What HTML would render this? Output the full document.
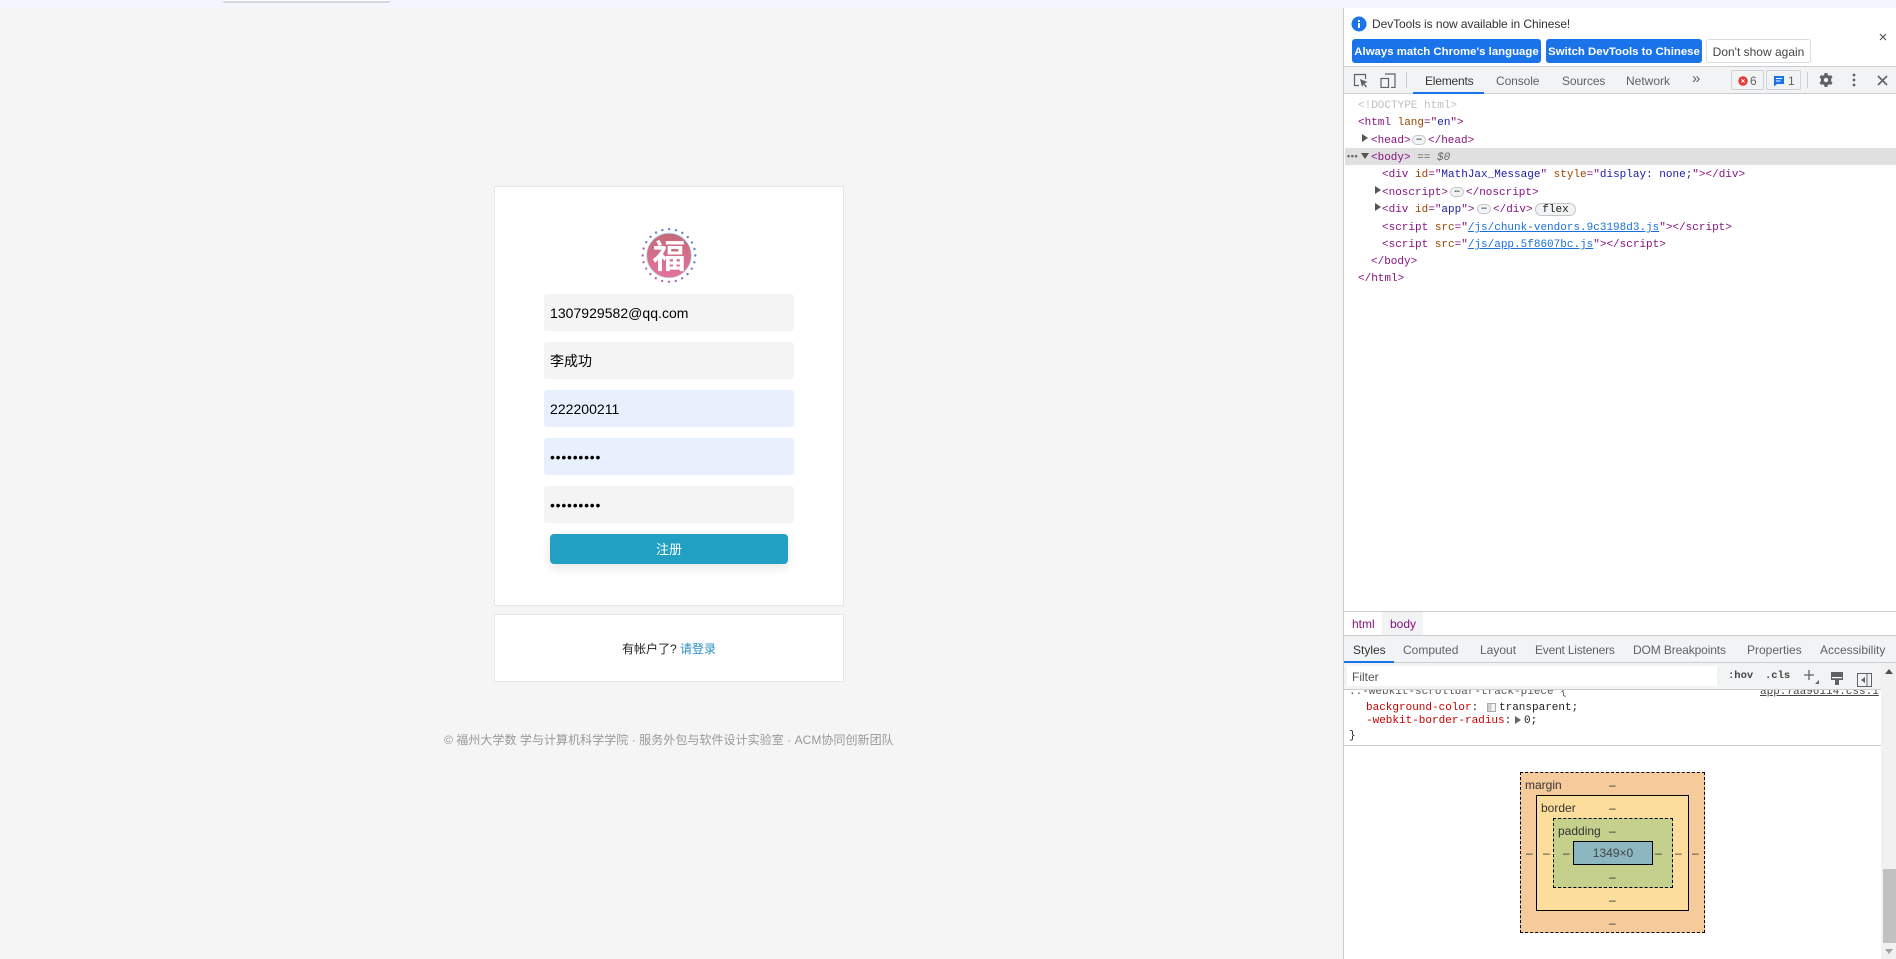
<!DOCTYPE html>
<html lang="zh">
<head>
<meta charset="utf-8">
<title>注册</title>
<style>
*{box-sizing:border-box}
html,body{margin:0;padding:0;width:1896px;height:959px;overflow:hidden;background:#f5f5f5;font-family:"Liberation Sans","Noto Sans CJK SC",sans-serif}
.a{position:absolute}
.t{position:absolute;white-space:nowrap}
.card{position:absolute;left:494px;width:350px;background:#fff;border:1px solid #e6e6e6}
.in{position:absolute;left:544px;width:250px;height:37px;border-radius:3px;background:#f4f4f4;font-size:14px;line-height:39px;padding-left:6px;color:#000;white-space:nowrap;overflow:hidden;letter-spacing:.03px}
.blue{background:#e8f0fe}
.pw{font-size:14px;letter-spacing:.78px;line-height:37px;padding-top:1px}
.dt{font-size:12px;color:#333;line-height:16px}
.tab{position:absolute;white-space:nowrap;font-size:12px;line-height:16px;color:#5f6368}
.m{position:absolute;white-space:nowrap;font-family:"Liberation Mono",monospace;font-size:11px;line-height:17px;color:#881280;margin-top:1px}
.n{color:#994500}.v{color:#1a1aa6}
.m a{color:#1a6fd8;text-decoration:underline}
.dots{position:absolute;width:14px;height:10px;border:1px solid #c4c4c4;border-radius:5px;background:#f1f3f4;color:#555;font:bold 5px/8px "Liberation Sans",sans-serif;text-align:center;letter-spacing:0;margin-top:-1px}
.tri{position:absolute;width:0;height:0;border-top:4px solid transparent;border-bottom:4px solid transparent;border-left:6px solid #555}
.btn{position:absolute;top:39px;height:24px;border-radius:3px;background:#1a73e8;color:#fff;font-size:11.4px;font-weight:bold;line-height:26px;text-align:center;white-space:nowrap;overflow:hidden}
.bx{position:absolute;font-size:12px;line-height:14px;color:#333;white-space:nowrap}
</style>
</head>
<body>
<div class="a" style="left:0;top:0;width:1896px;height:8px;background:#f3f7fd"></div>
<div class="a" style="left:222px;top:0;width:169px;height:3px;background:#fff;border-bottom:2px solid #d5d8de;border-radius:0 0 5px 5px"></div>

<div class="card" style="top:186px;height:420px"></div>
<div class="card" style="top:614px;height:68px"></div>

<svg class="a" style="left:639px;top:225px" width="60" height="60" viewBox="0 0 60 60">
<defs>
<linearGradient id="gd" x1="1" y1="0" x2="0" y2="1"><stop offset="0" stop-color="#3a9ae0"/><stop offset=".5" stop-color="#7d6fc0"/><stop offset="1" stop-color="#ea5f98"/></linearGradient>
<linearGradient id="gf" x1="0" y1="0" x2="0" y2="1"><stop offset="0" stop-color="#c26a78"/><stop offset="1" stop-color="#e4729c"/></linearGradient>
</defs>
<circle cx="30" cy="30.5" r="26.3" fill="none" stroke="url(#gd)" stroke-width="2.4" stroke-linecap="round" stroke-dasharray="0 6.885"/>
<circle cx="30" cy="30.5" r="22.3" fill="url(#gf)" stroke="#b9d8e8" stroke-width=".8"/>
<text x="30" y="43" text-anchor="middle" font-family="'Noto Sans CJK SC',sans-serif" font-size="33" font-weight="700" fill="#fff">福</text>
</svg>

<div class="in" style="top:294px">1307929582@qq.com</div>
<div class="in" style="top:342px">李成功</div>
<div class="in blue" style="top:390px">222200211</div>
<div class="in blue pw" style="top:438px">•••••••••</div>
<div class="in pw" style="top:486px">•••••••••</div>
<div class="a" style="left:550px;top:534px;width:238px;height:30px;border-radius:4px;background:#22a0c3;box-shadow:0 4px 10px rgba(0,0,0,.1);color:#fff;font-size:13px;line-height:32px;text-align:center">注册</div>
<div class="t" style="left:494px;width:350px;top:641px;text-align:center;font-size:12px;line-height:17px;color:#222">有帐户了? <span style="color:#2a8fc0">请登录</span></div>
<div class="t" style="left:444px;top:732px;font-size:12px;line-height:17px;color:#999;letter-spacing:.05px">© 福州大学数 学与计算机科学学院 · 服务外包与软件设计实验室 · ACM协同创新团队</div>

<!-- DevTools -->
<div class="a" style="left:1343px;top:8px;width:553px;height:951px;background:#fff;border-left:1px solid #ccc"></div>

<svg class="a" style="left:1351px;top:16px" width="16" height="16" viewBox="0 0 16 16"><circle cx="8" cy="8" r="7.5" fill="#1a73e8"/><rect x="7" y="7" width="2" height="5" fill="#fff"/><rect x="7" y="4" width="2" height="2" fill="#fff"/></svg>
<div class="t dt" style="left:1372px;top:16px;letter-spacing:-.07px">DevTools is now available in Chinese!</div>
<div class="btn" style="left:1352px;width:189px">Always match Chrome's language</div>
<div class="btn" style="left:1546px;width:156px">Switch DevTools to Chinese</div>
<div class="btn" style="left:1706px;width:105px;background:#fff;border:1px solid #dadce0;color:#444;font-weight:normal;font-size:12px;line-height:24px">Don't show again</div>
<svg class="a" style="left:1879px;top:33px" width="8" height="8" viewBox="0 0 8 8"><path d="M1 1L7 7M7 1L1 7" stroke="#555" stroke-width="1.2"/></svg>

<div class="a" style="left:1344px;top:66px;width:552px;height:28px;background:#f1f3f4;border-top:1px solid #ccc;border-bottom:1px solid #ccc"></div>
<svg class="a" style="left:1353px;top:73px" width="16" height="15" viewBox="0 0 16 15"><path d="M6 12.5H1.5V1.5H12.5V6" fill="none" stroke="#5f6368" stroke-width="1.2"/><path d="M7 6L14.5 9L11.5 10.5L14 13.5L13 14.5L10.3 11.5L9 14Z" fill="#5f6368"/></svg>
<svg class="a" style="left:1380px;top:73px" width="16" height="15" viewBox="0 0 16 15"><path d="M5 1H15V14.5H11" fill="none" stroke="#5f6368" stroke-width="1.2"/><rect x="1" y="5.5" width="7.5" height="9" fill="none" stroke="#5f6368" stroke-width="1.2"/></svg>
<div class="a" style="left:1406px;top:72px;width:1px;height:16px;background:#ccc"></div>
<div class="tab" style="left:1425px;top:73px;color:#333;letter-spacing:-.2px">Elements</div>
<div class="a" style="left:1413px;top:92px;width:71px;height:2px;background:#1a73e8"></div>
<div class="tab" style="left:1496px;top:73px;letter-spacing:-.1px">Console</div>
<div class="tab" style="left:1562px;top:73px;letter-spacing:-.1px">Sources</div>
<div class="tab" style="left:1626px;top:73px">Network</div>
<div class="tab" style="left:1692px;top:71px;font-size:15px">»</div>
<div class="a" style="left:1731px;top:70px;width:33px;height:20px;border:1px solid #d0d3d6;border-radius:2px"></div>
<svg class="a" style="left:1738px;top:76px" width="10" height="10" viewBox="0 0 10 10"><circle cx="5" cy="5" r="4.7" fill="#e53935"/><path d="M3.3 3.3L6.7 6.7M6.7 3.3L3.3 6.7" stroke="#fff" stroke-width="1"/></svg>
<div class="tab" style="left:1750px;top:73px">6</div>
<div class="a" style="left:1766px;top:70px;width:35px;height:20px;border:1px solid #d0d3d6;border-radius:2px"></div>
<svg class="a" style="left:1773px;top:75px" width="12" height="12" viewBox="0 0 12 12"><path d="M1 1H11V9H4L1 11.5Z" fill="#1a73e8"/><path d="M3 3.5H9M3 6H7.5" stroke="#fff" stroke-width="1"/></svg>
<div class="tab" style="left:1788px;top:73px">1</div>
<div class="a" style="left:1807px;top:72px;width:1px;height:16px;background:#ccc"></div>
<svg class="a" style="left:1819px;top:73px" width="14" height="14" viewBox="0 0 14 14"><path fill-rule="evenodd" fill="#5f6368" d="M5.6 0H8.4L8.8 2A5 5 0 0 1 10.2 2.8L12.1 2.1L13.5 4.5L12 5.9A5 5 0 0 1 12 8.1L13.5 9.5L12.1 11.9L10.2 11.2A5 5 0 0 1 8.8 12L8.4 14H5.6L5.2 12A5 5 0 0 1 3.8 11.2L1.9 11.9L.5 9.5L2 8.1A5 5 0 0 1 2 5.9L.5 4.5L1.9 2.1L3.8 2.8A5 5 0 0 1 5.2 2ZM7 4.8A2.2 2.2 0 1 0 7 9.2A2.2 2.2 0 1 0 7 4.8Z"/></svg>
<svg class="a" style="left:1851px;top:73px" width="6" height="14" viewBox="0 0 6 14"><circle cx="3" cy="2" r="1.4" fill="#5f6368"/><circle cx="3" cy="7" r="1.4" fill="#5f6368"/><circle cx="3" cy="12" r="1.4" fill="#5f6368"/></svg>
<svg class="a" style="left:1877px;top:75px" width="11" height="11" viewBox="0 0 11 11"><path d="M1 1L10 10M10 1L1 10" stroke="#5f6368" stroke-width="1.6"/></svg>

<div class="a" style="left:1345px;top:148px;width:551px;height:17px;background:#e0e0e0"></div>
<div class="m" style="left:1358px;top:97px;color:#c0c0c0">&lt;!DOCTYPE html&gt;</div>
<div class="m" style="left:1358px;top:114px">&lt;html <span class="n">lang</span>="<span class="v">en</span>"&gt;</div>
<div class="tri" style="left:1362px;top:134px"></div>
<div class="m" style="left:1371px;top:132px">&lt;head&gt;</div>
<div class="dots" style="left:1412px;top:136px">•••</div>
<div class="m" style="left:1428px;top:132px">&lt;/head&gt;</div>
<div class="t" style="left:1347px;top:152px;font-size:9px;line-height:8px;color:#666;font-weight:bold;letter-spacing:.6px">•••</div>
<div class="a" style="left:1361px;top:153px;width:0;height:0;border-left:4px solid transparent;border-right:4px solid transparent;border-top:6px solid #555"></div>
<div class="m" style="left:1371px;top:149px">&lt;body&gt; <span style="color:#666">== <i>$0</i></span></div>
<div class="m" style="left:1382px;top:166px">&lt;div <span class="n">id</span>="<span class="v">MathJax_Message</span>" <span class="n">style</span>="<span class="v">display: none;</span>"&gt;&lt;/div&gt;</div>
<div class="tri" style="left:1375px;top:186px"></div>
<div class="m" style="left:1382px;top:184px">&lt;noscript&gt;</div>
<div class="dots" style="left:1450px;top:188px">•••</div>
<div class="m" style="left:1466px;top:184px">&lt;/noscript&gt;</div>
<div class="tri" style="left:1375px;top:203px"></div>
<div class="m" style="left:1382px;top:201px">&lt;div <span class="n">id</span>="<span class="v">app</span>"&gt;</div>
<div class="dots" style="left:1477px;top:205px">•••</div>
<div class="m" style="left:1493px;top:201px">&lt;/div&gt;</div>
<div class="a" style="left:1535px;top:203px;width:41px;height:13px;border:1px solid #c4c4c4;border-radius:7px;background:#f1f3f4;font:11px/12px 'Liberation Mono',monospace;color:#222;text-align:center">flex</div>
<div class="m" style="left:1382px;top:219px">&lt;script <span class="n">src</span>="<a>/js/chunk-vendors.9c3198d3.js</a>"&gt;&lt;/script&gt;</div>
<div class="m" style="left:1382px;top:236px">&lt;script <span class="n">src</span>="<a>/js/app.5f8607bc.js</a>"&gt;&lt;/script&gt;</div>
<div class="m" style="left:1371px;top:253px">&lt;/body&gt;</div>
<div class="m" style="left:1358px;top:270px">&lt;/html&gt;</div>

<div class="a" style="left:1344px;top:611px;width:552px;height:1px;background:#ccc"></div>
<div class="a" style="left:1382px;top:612px;width:41px;height:23px;background:#f1f3f4"></div>
<div class="tab" style="left:1352px;top:616px;color:#881280">html</div>
<div class="tab" style="left:1390px;top:616px;color:#881280">body</div>
<div class="a" style="left:1344px;top:635px;width:552px;height:28px;background:#f1f3f4;border-top:1px solid #ccc;border-bottom:1px solid #ccc"></div>
<div class="tab" style="left:1353px;top:642px;color:#333">Styles</div>
<div class="a" style="left:1344px;top:661px;width:50px;height:2px;background:#1a73e8"></div>
<div class="tab" style="left:1403px;top:642px">Computed</div>
<div class="tab" style="left:1480px;top:642px">Layout</div>
<div class="tab" style="left:1535px;top:642px;letter-spacing:-.2px">Event Listeners</div>
<div class="tab" style="left:1633px;top:642px;letter-spacing:-.12px">DOM Breakpoints</div>
<div class="tab" style="left:1747px;top:642px">Properties</div>
<div class="tab" style="left:1820px;top:642px">Accessibility</div>

<div class="m" style="left:1349px;top:683px;color:#555">::-webkit-scrollbar-track-piece {</div>
<div class="m" style="left:1760px;top:683px;color:#444;text-decoration:underline">app.7aa96114.css:1</div>
<div class="a" style="left:1344px;top:663px;width:537px;height:27px;background:#f1f3f4;border-bottom:1px solid #ccc"></div>
<div class="a" style="left:1347px;top:666px;width:370px;height:20px;background:#fff"></div>
<div class="tab" style="left:1352px;top:669px;color:#555">Filter</div>
<div class="m" style="left:1728px;top:667px;color:#444;font-weight:bold;font-size:10.5px">:hov</div>
<div class="m" style="left:1765px;top:667px;color:#444;font-weight:bold;font-size:10.5px">.cls</div>
<svg class="a" style="left:1803px;top:669px" width="18" height="18" viewBox="0 0 18 18"><path d="M6 1V11M1 6H11" stroke="#5f6368" stroke-width="1.3"/><path d="M12 15H16V11Z" fill="#5f6368"/></svg>
<svg class="a" style="left:1831px;top:672px" width="12" height="14" viewBox="0 0 12 14"><path d="M0 0H12V8H8V13H4V8H0Z" fill="#5f6368"/><rect x="1" y="5" width="10" height="1.2" fill="#fff"/></svg>
<svg class="a" style="left:1857px;top:673px" width="15" height="14" viewBox="0 0 15 14"><rect x=".5" y=".5" width="14" height="13" fill="none" stroke="#5f6368"/><path d="M10 1V13" stroke="#5f6368"/><path d="M8 4V10L4 7Z" fill="#5f6368"/></svg>

<div class="m" style="left:1366px;top:699px;color:#c80000">background-color<span style="color:#222">:</span></div>
<div class="a" style="left:1487px;top:703px;width:9px;height:9px;border:1px solid #aaa;background:linear-gradient(90deg,#ccc 50%,#f4f4f4 50%)"></div>
<div class="m" style="left:1499px;top:699px;color:#222">transparent;</div>
<div class="m" style="left:1366px;top:712px;color:#c80000">-webkit-border-radius<span style="color:#222">:</span></div>
<div class="a" style="left:1515px;top:716px;width:0;height:0;border-top:4px solid transparent;border-bottom:4px solid transparent;border-left:6px solid #666"></div>
<div class="m" style="left:1524px;top:712px;color:#222">0;</div>
<div class="m" style="left:1349px;top:727px;color:#222">}</div>
<div class="a" style="left:1344px;top:745px;width:537px;height:1px;background:#ccc"></div>

<div class="a" style="left:1881px;top:663px;width:15px;height:296px;background:#f1f1f1"></div>
<div class="a" style="left:1883px;top:869px;width:13px;height:74px;background:#c1c1c1"></div>
<div class="a" style="left:1885px;top:669px;width:0;height:0;border-left:4px solid transparent;border-right:4px solid transparent;border-bottom:5px solid #505050"></div>
<div class="a" style="left:1885px;top:949px;width:0;height:0;border-left:4px solid transparent;border-right:4px solid transparent;border-top:5px solid #a3a3a3"></div>

<div class="a" style="left:1520px;top:772px;width:185px;height:161px;background:#f6cb9b;border:1px dashed #000"></div>
<div class="a" style="left:1536px;top:795px;width:153px;height:116px;background:#fddd9b;border:1px solid #000"></div>
<div class="a" style="left:1553px;top:818px;width:120px;height:70px;background:#c4d08c;border:1px dashed #000"></div>
<div class="a" style="left:1573px;top:841px;width:80px;height:24px;background:#8cb6c0;border:1px solid #000"></div>
<div class="bx" style="left:1525px;top:778px">margin</div>
<div class="bx" style="left:1541px;top:801px">border</div>
<div class="bx" style="left:1558px;top:824px">padding</div>
<div class="bx" style="left:1573px;top:846px;width:80px;text-align:center;color:#444">1349×0</div>
<div class="bx" style="left:1609px;top:778px">–</div>
<div class="bx" style="left:1609px;top:801px">–</div>
<div class="bx" style="left:1609px;top:824px">–</div>
<div class="bx" style="left:1609px;top:870px">–</div>
<div class="bx" style="left:1609px;top:893px">–</div>
<div class="bx" style="left:1609px;top:916px">–</div>
<div class="bx" style="left:1526px;top:846px">–</div>
<div class="bx" style="left:1543px;top:846px">–</div>
<div class="bx" style="left:1563px;top:846px">–</div>
<div class="bx" style="left:1655px;top:846px">–</div>
<div class="bx" style="left:1675px;top:846px">–</div>
<div class="bx" style="left:1692px;top:846px">–</div>
</body>
</html>
